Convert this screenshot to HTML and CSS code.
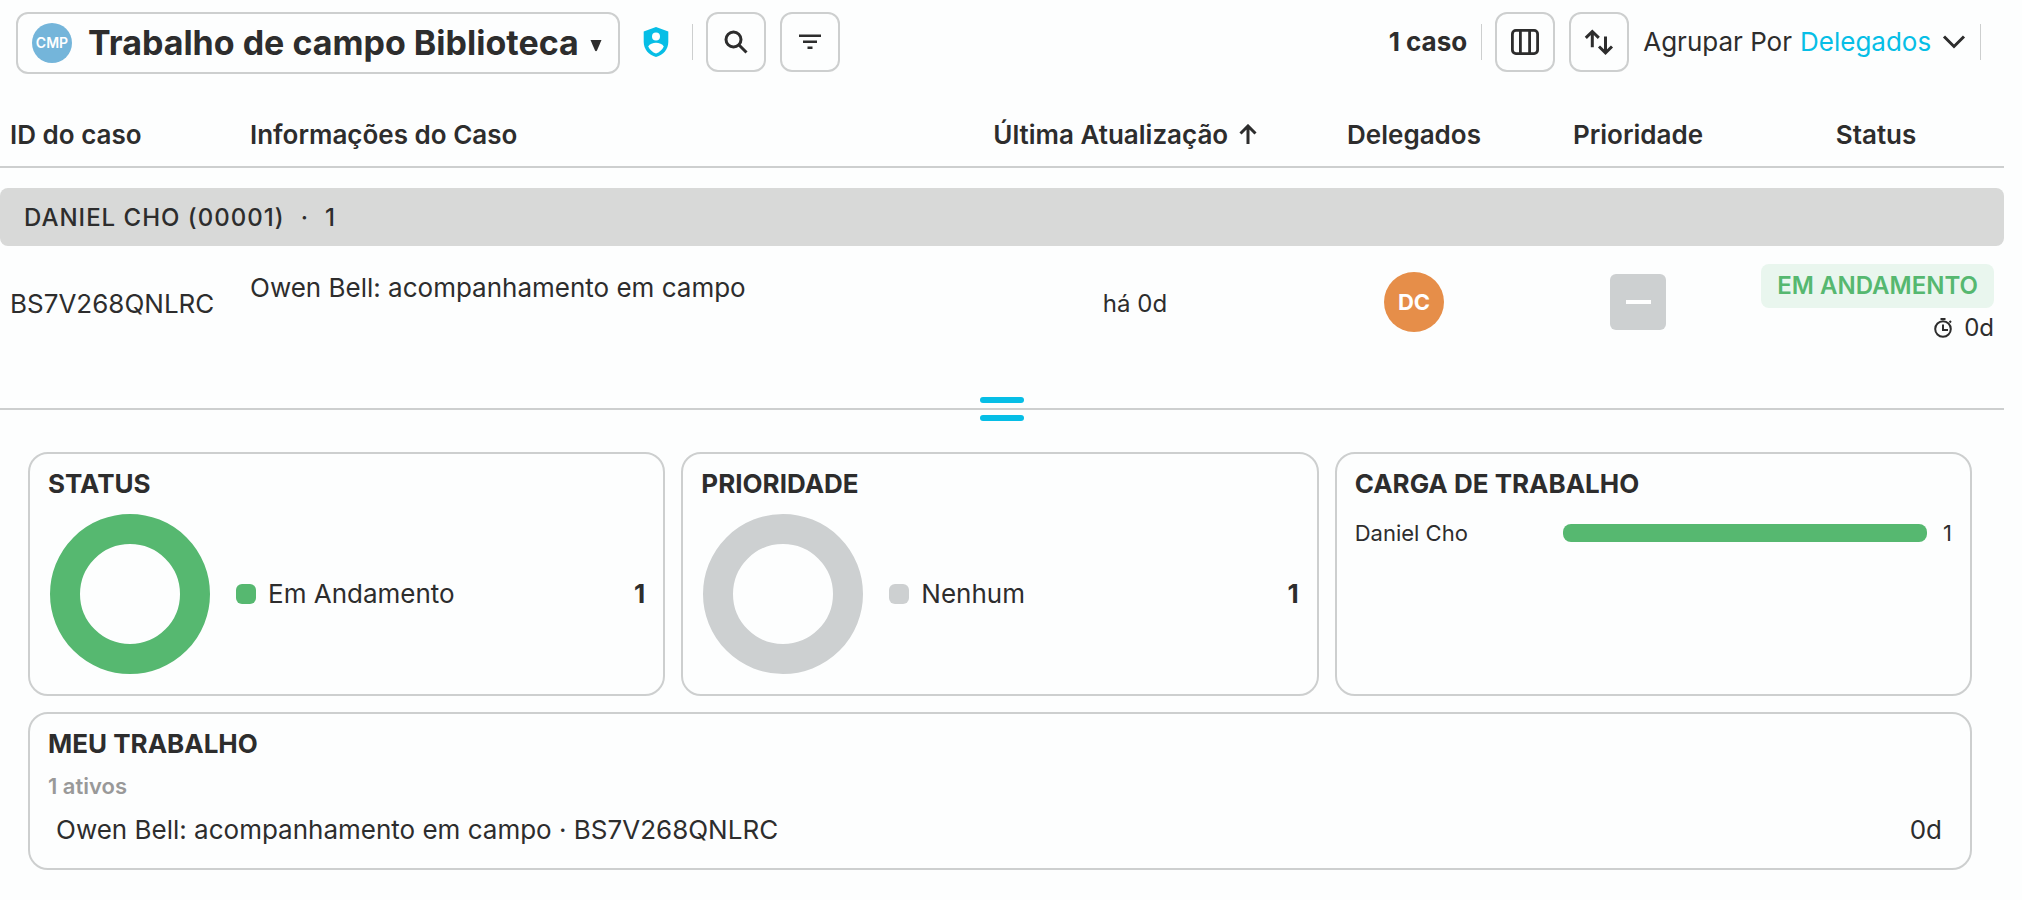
FILE: index.html
```
<!DOCTYPE html>
<html lang="pt-BR">
<head>
    <meta charset="UTF-8">
    <meta name="viewport" content="width=device-width, initial-scale=1.0">
    <title>Trabalho de campo Biblioteca</title>
    <link rel="stylesheet" href="styles.css">
</head>
<body>
    <header class="toolbar">
        <button class="project" type="button" aria-haspopup="listbox">
            <span class="project-avatar">CMP</span>
            <span class="project-name">Trabalho de campo Biblioteca</span>
            <svg class="caret" viewBox="0 0 12 12" aria-hidden="true"><path d="M.500 0h11L7 10.500q-1 1.500-2 0z"/></svg>
        </button>
        <svg class="shield" viewBox="0 0 26 30" role="img" aria-label="Acesso protegido">
            <path fill="#06bee6" d="M13 0 25.300 4.500v10.500C25.300 22 20.500 28 13 30 5.500 28 .700 22 .700 15V4.500z"/>
            <circle cx="13" cy="9.500" r="4" fill="#fdfefe"/>
            <path fill="#fdfefe" d="M5.200 19.500C6.500 17 10 15.800 13 15.800s6.500 1.200 7.800 3.700C19 23 16.500 25.300 13 26.500 9.500 25.300 7 23 5.200 19.500z"/>
        </svg>
        <span class="divider"></span>
        <div class="tools">
            <button class="icon-btn" type="button" aria-label="Pesquisar">
                <svg viewBox="0 0 24 24" fill="none" stroke="currentColor" stroke-width="3">
                    <circle cx="9.500" cy="9.500" r="7.500"/>
                    <path d="m15 15 7.500 7.500"/>
                </svg>
            </button>
            <button class="icon-btn" type="button" aria-label="Filtrar">
                <svg viewBox="0 0 24 24" fill="currentColor">
                    <path d="M1 4.500h22v2.500H1zM5 10.500h14V13H5zM9.500 16.500h5V19h-5z"/>
                </svg>
            </button>
        </div>
        <div class="toolbar-right">
            <span class="case-count">1 caso</span>
            <span class="divider"></span>
            <div class="tools">
                <button class="icon-btn" type="button" aria-label="Colunas">
                    <svg class="icon-large" viewBox="-15 -14 30 28" fill="none" stroke="currentColor" stroke-width="2.800">
                        <rect x="-12.600" y="-11.600" width="25.200" height="23.200" rx="3.500"/>
                        <path d="M-4.600-11.600v23.200M4.600-11.600v23.200"/>
                    </svg>
                </button>
                <button class="icon-btn" type="button" aria-label="Ordenar">
                    <svg class="icon-large" viewBox="-15 -14 30 28" fill="none" stroke="currentColor" stroke-width="3">
                        <path d="M-6.700 5.300V-10M-13.200-4.200l6.500-6.300 6.500 6.300M6.500-5.500V10M0 4.500l6.500 6.300L13 4.500"/>
                    </svg>
                </button>
            </div>
            <div class="group-by">
                <label for="group-by">Agrupar Por</label>
                <select id="group-by">
                    <option>Delegados</option>
                </select>
                <svg class="chevron" viewBox="0 0 24 14" fill="none" stroke="currentColor" stroke-width="3" aria-hidden="true"><path d="m2 1.500 10 10 10-10"/></svg>
            </div>
            <span class="divider"></span>
        </div>
    </header>

    <main>
        <div class="case-list">
            <table class="cases">
                <colgroup>
                    <col class="col-id">
                    <col>
                    <col class="col-updated">
                    <col class="col-assignee">
                    <col class="col-priority">
                    <col class="col-status">
                </colgroup>
                <thead>
                    <tr>
                        <th class="left">ID do caso</th>
                        <th class="left">Informações do Caso</th>
                        <th class="sorted">Última Atualização
                            <svg class="sort-arrow" viewBox="0 0 18 20" fill="none" stroke="currentColor" stroke-width="3" aria-hidden="true"><path d="M9 20V2M1.500 9.500 9 2l7.500 7.500"/></svg>
                        </th>
                        <th>Delegados</th>
                        <th>Prioridade</th>
                        <th>Status</th>
                    </tr>
                </thead>
                <tbody>
                    <tr class="spacer"><td colspan="6"></td></tr>
                    <tr class="group">
                        <td colspan="6"><span>DANIEL CHO (00001)</span><span>·</span><span>1</span></td>
                    </tr>
                    <tr class="case">
                        <td class="left">BS7V268QNLRC</td>
                        <td class="info">Owen Bell: acompanhamento em campo</td>
                        <td class="updated">há 0d</td>
                        <td><span class="assignee">DC</span></td>
                        <td><span class="priority" role="img" aria-label="Nenhum"></span></td>
                        <td class="status-cell">
                            <span class="badge">EM ANDAMENTO</span>
                            <span class="elapsed">
                                <svg viewBox="0 0 18 20" fill="none" stroke="currentColor" stroke-width="2" aria-hidden="true">
                                    <circle cx="9" cy="11" r="7.800"/>
                                    <path d="M6.500 1h5M9 6.500V12h5M15.500 3l1.500 1.500"/>
                                </svg>
                                0d
                            </span>
                        </td>
                    </tr>
                </tbody>
            </table>
        </div>

        <div class="splitter" role="separator"><span class="handle"></span></div>

        <div class="dashboard">
            <section class="card">
                <h2>STATUS</h2>
                <div class="chart">
                    <div class="donut green"></div>
                    <span class="swatch green"></span>
                    <span class="legend">Em Andamento</span>
                    <strong>1</strong>
                </div>
            </section>
            <section class="card">
                <h2>PRIORIDADE</h2>
                <div class="chart">
                    <div class="donut gray"></div>
                    <span class="swatch gray"></span>
                    <span class="legend">Nenhum</span>
                    <strong>1</strong>
                </div>
            </section>
            <section class="card">
                <h2>CARGA DE TRABALHO</h2>
                <div class="workload">
                    <span class="name">Daniel Cho</span>
                    <span class="track"><span class="bar" style="width: 100%"></span></span>
                    <span>1</span>
                </div>
            </section>
            <section class="card wide">
                <h2>MEU TRABALHO</h2>
                <p class="active-count">1 ativos</p>
                <div class="work-item">
                    <span>Owen Bell: acompanhamento em campo · BS7V268QNLRC</span>
                    <span>0d</span>
                </div>
            </section>
        </div>
    </main>
</body>
</html>
```
FILE: styles.css
```
* {
    box-sizing: border-box;
}
body {
    margin: 0;
    background: #fdfefe;
    color: #2d2d2d;
    font-family: Inter, "Liberation Sans", sans-serif;
    font-size: 26px;
    line-height: 32px;
}
button, select {
    font: inherit;
    color: inherit;
    background: none;
    cursor: pointer;
}

/* toolbar */
.toolbar {
    display: flex;
    align-items: flex-start;
    height: 102px;
    padding: 12px 41px 0 16px;
}
.project {
    display: flex;
    align-items: center;
    height: 62px;
    padding: 0 16px 0 14px;
    border: 2px solid #cdcfcf;
    border-radius: 12px;
    white-space: nowrap;
}
.project-avatar {
    width: 40px;
    height: 40px;
    margin-right: 16px;
    border-radius: 50%;
    background: #74b5da;
    color: #fff;
    font-size: 14px;
    font-weight: 600;
    line-height: 40px;
    text-align: center;
}
.project-name {
    font-size: 34px;
    font-weight: 700;
    line-height: 42px;
}
.caret {
    width: 12px;
    height: 12px;
    margin: 6px 0 0 11px;
    fill: currentColor;
}
.shield {
    width: 26px;
    height: 30px;
    margin: 15px 23px 0;
}
.divider {
    flex: none;
    width: 1px;
    height: 36px;
    margin-top: 12px;
    background: #cdcfcf;
}
.tools {
    display: flex;
    gap: 14px;
    margin-left: 13px;
}
.icon-btn {
    display: flex;
    align-items: center;
    justify-content: center;
    width: 60px;
    height: 60px;
    padding: 0;
    border: 2px solid #cdcfcf;
    border-radius: 12px;
}
.icon-btn svg {
    width: 24px;
    height: 24px;
}
.icon-btn .icon-large {
    width: 30px;
    height: 28px;
}
.toolbar-right {
    display: flex;
    margin-left: auto;
    white-space: nowrap;
}
.case-count {
    margin-right: 14px;
    font-weight: 700;
    line-height: 60px;
}
.group-by {
    display: flex;
    align-items: center;
    height: 60px;
    margin: 0 14px;
}
.group-by select {
    appearance: none;
    margin: 0 -36px 0 8px;
    padding: 0 46px 0 0;
    border: 0;
    color: #06bee6;
}
.chevron {
    width: 24px;
    height: 14px;
    pointer-events: none;
}

/* case table */
.case-list {
    padding: 0 18px 48px 0;
}
.cases {
    width: 100%;
    table-layout: fixed;
    border-collapse: separate;
    border-spacing: 0;
}
.col-id { width: 240px; }
.col-updated { width: 330px; }
.col-assignee { width: 228px; }
.col-priority { width: 220px; }
.col-status { width: 256px; }
.cases th {
    height: 66px;
    padding: 2px 10px 0;
    border-bottom: 2px solid #cdcfcf;
    font-weight: 600;
}
.cases td {
    padding: 2px 10px 0;
    text-align: center;
}
.cases .left {
    text-align: left;
}
.cases .sorted {
    padding-right: 30px;
}
.sort-arrow {
    width: 18px;
    height: 20px;
    margin-left: 4px;
}
.cases .spacer td {
    height: 20px;
    padding: 0;
}
.cases .group td {
    height: 58px;
    padding: 2px 24px 0;
    border-radius: 8px;
    background: #d8d9d8;
    font-size: 24px;
    font-weight: 500;
    letter-spacing: 1px;
    text-align: left;
}
.group span {
    margin-right: 16px;
}
.case td {
    height: 114px;
}
.cases .info {
    padding-top: 26px;
    text-align: left;
    vertical-align: top;
}
.updated, .elapsed {
    font-size: 24px;
}
.assignee {
    display: block;
    width: 60px;
    height: 60px;
    margin: 0 auto 4px;
    border-radius: 50%;
    background: #e68e49;
    color: #fff;
    font-size: 22px;
    font-weight: 700;
    line-height: 60px;
}
.priority {
    display: flex;
    align-items: center;
    justify-content: center;
    width: 56px;
    height: 56px;
    margin: 0 auto 4px;
    border-radius: 6px;
    background: #cdd0d1;
}
.priority::before {
    content: "";
    width: 25px;
    height: 4px;
    background: #fff;
}
.badge {
    display: block;
    width: fit-content;
    margin-left: auto;
    padding: 0 16px;
    border-radius: 8px;
    background: #e9f6ee;
    color: #56b870;
    font-size: 24px;
    font-weight: 600;
    line-height: 44px;
    white-space: nowrap;
}
.elapsed {
    display: flex;
    align-items: center;
    justify-content: flex-end;
    gap: 12px;
    margin-top: 4px;
}
.elapsed svg {
    width: 18px;
    height: 20px;
}

/* resize handle between list and dashboard */
.splitter {
    position: relative;
    height: 2px;
    margin-right: 18px;
    background: #cdcfcf;
}
.handle {
    position: absolute;
    top: -11px;
    left: calc(50% - 22px);
    width: 44px;
    height: 24px;
}
.handle::before, .handle::after {
    content: "";
    display: block;
    height: 6px;
    margin-bottom: 12px;
    border-radius: 3px;
    background: #06bee6;
}

/* dashboard */
.dashboard {
    display: grid;
    grid-template-columns: repeat(3, 1fr);
    gap: 16px;
    padding: 42px 50px 30px 28px;
}
.card {
    min-height: 244px;
    padding: 14px 18px 20px;
    border: 2px solid #cdcfcf;
    border-radius: 20px;
}
.card h2 {
    margin: 0;
    font-size: 26px;
    font-weight: 700;
    line-height: 32px;
}
.wide {
    grid-column: 1 / -1;
    min-height: 158px;
}
.chart {
    display: flex;
    align-items: center;
    margin-top: 14px;
    padding-left: 2px;
}
.donut {
    width: 160px;
    height: 160px;
    border: 30px solid;
    border-radius: 50%;
}
.donut.green { border-color: #56b870; }
.donut.gray { border-color: #cdd0d1; }
.swatch {
    width: 20px;
    height: 20px;
    margin: 0 12px 0 26px;
    border-radius: 6px;
}
.swatch.green { background: #56b870; }
.swatch.gray { background: #cdd0d1; }
.legend {
    flex: 1;
}
.workload {
    display: flex;
    align-items: center;
    margin-top: 17px;
    font-size: 22px;
}
.workload .name {
    width: 208px;
}
.track {
    flex: 1;
    height: 18px;
    margin-right: 16px;
}
.bar {
    display: block;
    height: 100%;
    border-radius: 8px;
    background: #56b870;
}
.active-count {
    margin: 10px 0 12px;
    color: #999;
    font-size: 22px;
    font-weight: 600;
}
.work-item {
    display: flex;
    justify-content: space-between;
    padding: 0 10px 0 8px;
}
```
